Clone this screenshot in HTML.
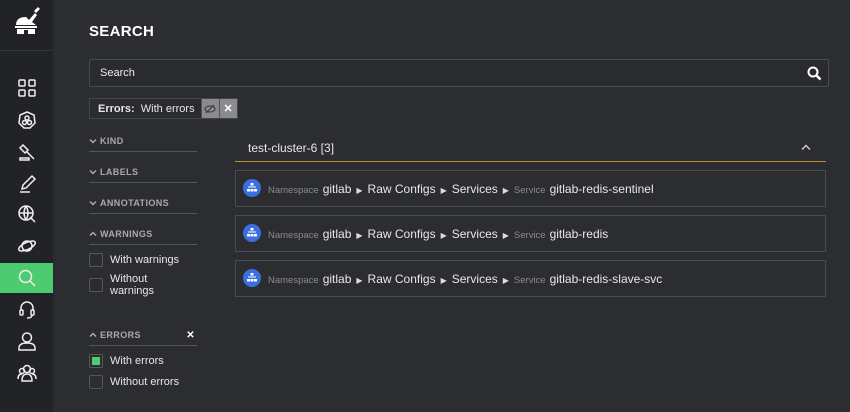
<!DOCTYPE html>
<html><head><style>
*{box-sizing:border-box;margin:0;padding:0}
body{width:850px;height:412px;background:#2c2d31;font-family:"Liberation Sans",sans-serif;color:#e8e8e8;position:relative;overflow:hidden}
.sb{position:absolute;left:0;top:0;width:53px;height:412px;background:#222326}
.logo{position:absolute;left:0;top:0;width:53px;height:51px;border-bottom:1px solid #35363a}
.ic{position:absolute;left:0;width:53px;height:30px;display:flex;align-items:center;justify-content:center}
.ic svg{width:20px;height:20px;fill:none;stroke:#eee;stroke-width:1.5}
.act{background:#4ccb70}
.abs{position:absolute}
h1{position:absolute;left:89px;top:23px;font-size:15px;font-weight:bold;letter-spacing:.3px;color:#fff}
.search{left:89px;top:59px;width:740px;height:28px;border:1px solid #4a4b50;border-radius:2px;background:#2a2b2f;font-size:11px;padding:7px 10px;color:#eee}
.chip{left:89px;top:98px;height:21px;border:1px solid #44454a;display:flex;font-size:11px;background:#2a2b2f}
.chip .t{padding:4px 6px 0 8px}
.chip .b{width:18px;background:#8a8b8e;display:flex;align-items:center;justify-content:center;color:#fff;font-weight:bold;border-left:1px solid #555}
.sec{position:absolute;left:89px;width:108px;border-bottom:1px solid #55565a;font-size:9px;font-weight:bold;color:#aaa;letter-spacing:.4px;padding-bottom:5px;padding-left:11px}
.sec svg{position:absolute;left:0;top:2px}
.cb{position:absolute;left:89px;width:14px;height:14px;border:1px solid #55565a;border-radius:2px}
.lbl{position:absolute;left:110px;font-size:11px;color:#e8e8e8;line-height:12px}
.hdr{left:235px;top:133px;width:591px;height:29px;border-bottom:1px solid #c28a3a;font-size:12px;padding:8px 13px}
.row{position:absolute;left:235px;width:591px;height:37px;border:1px solid #4a4b50;padding:11px 0 0 26px;font-size:12px;white-space:nowrap;line-height:14px}
.row .k{font-size:9.5px;color:#8a8b8e;margin:0 4px 0 6px}
.row .tri{font-size:8px;margin:0 5px;color:#ddd}
.kube{position:absolute;left:7px;top:8px;width:18px;height:18px;border-radius:50%;background:#3b6fe0;text-align:center;padding-top:4px;line-height:9px}
</style></head><body>
<div class="sb">
 <div class="logo"><svg width="53" height="51" viewBox="0 0 53 51"><path d="M16 25 Q16 17 26 17 L29 20 L35 13 L37 15 L32 22 L36 25Z" fill="#fff"/><path d="M34 11 l4 -4 2 2 -4 4z" fill="#fff"/><rect x="15" y="26" width="22" height="2" fill="#fff"/><rect x="17" y="29" width="18" height="5" fill="#fff"/><rect x="24" y="30" width="4" height="4" fill="#222326"/></svg></div>
 <div class="ic" style="top:73px"><svg viewBox="0 0 20 20"><rect x="2" y="2" width="6" height="6" rx="1"/><rect x="12" y="2" width="6" height="6" rx="1"/><rect x="2" y="12" width="6" height="6" rx="1"/><rect x="12" y="12" width="6" height="6" rx="1"/></svg></div>
 <div class="ic" style="top:105px"><svg viewBox="0 0 20 20"><path d="M10 2 L17 5 L18 13 L13 18 L7 18 L2 13 L3 5Z"/><circle cx="10" cy="8" r="2"/><circle cx="7.5" cy="12.5" r="2"/><circle cx="12.5" cy="12.5" r="2"/></svg></div>
 <div class="ic" style="top:137px"><svg viewBox="0 0 20 20"><path d="M6 3 l5 5 -3 3 -5 -5z M9.5 9.5 L17 17 M3 16 h9 v2 h-9z"/></svg></div>
 <div class="ic" style="top:169px"><svg viewBox="0 0 20 20"><path d="M15 2 l3 3 -9 9 -4 1 1 -4z M3 18 h10"/></svg></div>
 <div class="ic" style="top:199px"><svg viewBox="0 0 20 20"><circle cx="9" cy="9" r="7"/><path d="M2 9 h14 M9 2 q-4 7 0 14 M9 2 q4 7 0 14 M13 13 l5 5"/></svg></div>
 <div class="ic" style="top:231px"><svg viewBox="0 0 20 20"><circle cx="10" cy="10" r="5"/><ellipse cx="10" cy="10" rx="9" ry="3.5" transform="rotate(-25 10 10)"/></svg></div>
 <div class="ic act" style="top:263px"><svg viewBox="0 0 20 20"><circle cx="8.5" cy="8.5" r="6"/><path d="M13 13 l5 5"/></svg></div>
 <div class="ic" style="top:294px"><svg viewBox="0 0 20 20"><path d="M4 12 v-3 a6 6 0 0 1 12 0 v3"/><rect x="3" y="11" width="3" height="5" rx="1"/><rect x="14" y="11" width="3" height="5" rx="1"/><path d="M15 16 q0 3 -5 3"/></svg></div>
 <div class="ic" style="top:326px"><svg viewBox="0 0 20 20"><circle cx="10" cy="6.5" r="4.5"/><path d="M2 19 v-2 q0 -5 8 -5 q8 0 8 5 v2z"/></svg></div>
 <div class="ic" style="top:358px"><svg viewBox="0 0 20 20"><circle cx="10" cy="6" r="3.5"/><circle cx="5" cy="8" r="2.5"/><circle cx="15" cy="8" r="2.5"/><path d="M5 18 q0 -7 5 -7 q5 0 5 7z M1 16 q0 -5 4 -5 M19 16 q0 -5 -4 -5"/></svg></div>
</div>
<h1>SEARCH</h1>
<div class="abs search">Search<svg style="position:absolute;right:6px;top:6px" width="15" height="15" viewBox="0 0 15 15"><circle cx="6" cy="6" r="4.5" fill="none" stroke="#fff" stroke-width="2"/><path d="M9.5 9.5 l4 4" stroke="#fff" stroke-width="2.5"/></svg></div>
<div class="abs chip"><span class="t"><b>Errors:</b>&nbsp; With errors</span><span class="b"><svg width="12" height="10" viewBox="0 0 12 10"><ellipse cx="6" cy="5" rx="5" ry="3" fill="none" stroke="#333" stroke-width="1"/><path d="M2 9 L10 1" stroke="#333"/></svg></span><span class="b" style="font-size:11px">✕</span></div>
<div class="sec" style="top:136px"><svg width="8" height="6" viewBox="0 0 8 6"><path d="M1 1.5 L4 4.5 L7 1.5" stroke="#aaa" stroke-width="1.5" fill="none"/></svg>KIND</div>
<div class="sec" style="top:167px"><svg width="8" height="6" viewBox="0 0 8 6"><path d="M1 1.5 L4 4.5 L7 1.5" stroke="#aaa" stroke-width="1.5" fill="none"/></svg>LABELS</div>
<div class="sec" style="top:198px"><svg width="8" height="6" viewBox="0 0 8 6"><path d="M1 1.5 L4 4.5 L7 1.5" stroke="#aaa" stroke-width="1.5" fill="none"/></svg>ANNOTATIONS</div>
<div class="sec" style="top:229px"><svg width="8" height="6" viewBox="0 0 8 6"><path d="M1 4.5 L4 1.5 L7 4.5" stroke="#aaa" stroke-width="1.5" fill="none"/></svg>WARNINGS</div>
<div class="cb" style="top:253px"></div><div class="lbl" style="top:254px">With warnings</div>
<div class="cb" style="top:278px"></div><div class="lbl" style="top:273px">Without<br>warnings</div>
<div class="sec" style="top:330px"><svg width="8" height="6" viewBox="0 0 8 6"><path d="M1 4.5 L4 1.5 L7 4.5" stroke="#aaa" stroke-width="1.5" fill="none"/></svg>ERRORS<span style="position:absolute;right:2px;color:#fff;font-size:10px">✕</span></div>
<div class="cb" style="top:354px;padding:2px"><div style="width:8px;height:8px;background:#4ccb70"></div></div><div class="lbl" style="top:355px">With errors</div>
<div class="cb" style="top:375px"></div><div class="lbl" style="top:376px">Without errors</div>
<div class="abs hdr">test-cluster-6 [3]<svg style="position:absolute;right:15px;top:11px" width="10" height="7" viewBox="0 0 10 7"><path d="M1 5.5 L5 1.5 L9 5.5" stroke="#ccc" stroke-width="1.5" fill="none"/></svg></div>
<div class="row" style="top:170px"><span class="kube"><svg width="10" height="9" viewBox="0 0 10 9" fill="#fff"><rect x="3.5" y="0" width="3" height="2.5"/><rect x="0" y="6" width="3" height="2.5"/><rect x="3.5" y="6" width="3" height="2.5"/><rect x="7" y="6" width="3" height="2.5"/><rect x="1" y="3.5" width="8" height="1"/></svg></span><span class="k">Namespace</span>gitlab<span class="tri">▶</span>Raw Configs<span class="tri">▶</span>Services<span class="tri">▶</span><span class="k" style="margin-left:0">Service</span>gitlab-redis-sentinel</div>
<div class="row" style="top:215px"><span class="kube"><svg width="10" height="9" viewBox="0 0 10 9" fill="#fff"><rect x="3.5" y="0" width="3" height="2.5"/><rect x="0" y="6" width="3" height="2.5"/><rect x="3.5" y="6" width="3" height="2.5"/><rect x="7" y="6" width="3" height="2.5"/><rect x="1" y="3.5" width="8" height="1"/></svg></span><span class="k">Namespace</span>gitlab<span class="tri">▶</span>Raw Configs<span class="tri">▶</span>Services<span class="tri">▶</span><span class="k" style="margin-left:0">Service</span>gitlab-redis</div>
<div class="row" style="top:260px"><span class="kube"><svg width="10" height="9" viewBox="0 0 10 9" fill="#fff"><rect x="3.5" y="0" width="3" height="2.5"/><rect x="0" y="6" width="3" height="2.5"/><rect x="3.5" y="6" width="3" height="2.5"/><rect x="7" y="6" width="3" height="2.5"/><rect x="1" y="3.5" width="8" height="1"/></svg></span><span class="k">Namespace</span>gitlab<span class="tri">▶</span>Raw Configs<span class="tri">▶</span>Services<span class="tri">▶</span><span class="k" style="margin-left:0">Service</span>gitlab-redis-slave-svc</div>
</body></html>
